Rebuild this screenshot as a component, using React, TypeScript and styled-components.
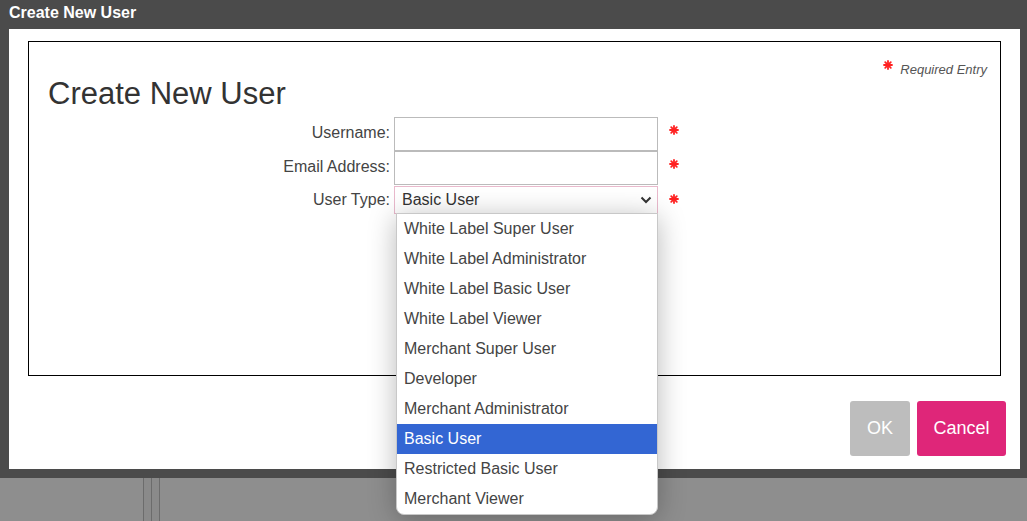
import styled, { createGlobalStyle } from "styled-components";

const GlobalStyle = createGlobalStyle`
  html, body {
    margin: 0;
    padding: 0;
    background: #8e8e8e;
    font-family: "Liberation Sans", Arial, sans-serif;
    overflow: hidden;
  }
`;

const userTypes = [
  "White Label Super User",
  "White Label Administrator",
  "White Label Basic User",
  "White Label Viewer",
  "Merchant Super User",
  "Developer",
  "Merchant Administrator",
  "Basic User",
  "Restricted Basic User",
  "Merchant Viewer",
];

const Page = styled.div`
  width: 1027px;
  height: 521px;
  display: flex;
  flex-direction: column;
`;

const Dialog = styled.div`
  background: #4b4b4b;
  padding: 0 7px 9px 9px;
  display: flex;
  flex-direction: column;
`;

const TitleBar = styled.div`
  height: 29px;
  line-height: 26px;
  color: #fff;
  font-weight: bold;
  font-size: 16px;
`;

const Body = styled.div`
  background: #fff;
  height: 440px;
  box-sizing: border-box;
  padding: 12px 14px 13px 19px;
  display: flex;
  flex-direction: column;
`;

const FormBox = styled.div`
  border: 1px solid #000;
  height: 335px;
  box-sizing: border-box;
  margin-right: 5px;
  padding: 17px 13px 0 19px;
  display: flex;
  flex-direction: column;
`;

const RequiredNote = styled.div`
  display: flex;
  justify-content: flex-end;
  align-items: flex-start;
  gap: 7px;
  height: 20px;
  font-size: 13px;
  font-style: italic;
  color: #555;
  line-height: 21px;
  svg {
    margin-top: 1px;
  }
`;

const Heading = styled.h1`
  margin: -3px 0 0;
  font-size: 31px;
  font-weight: normal;
  line-height: 36px;
  color: #333;
`;

const Fields = styled.div`
  margin-top: 5px;
  display: grid;
  grid-template-columns: 342px 264px auto;
  column-gap: 4px;
  align-items: center;
`;

const Label = styled.label<{ $select?: boolean }>`
  text-align: right;
  font-size: 16px;
  color: #444;
  margin-top: ${(p) => (p.$select ? "1px" : "-3px")};
`;

const TextInput = styled.input`
  box-sizing: border-box;
  width: 264px;
  height: 34px;
  border: 1px solid #bbb;
  margin: 0;
  padding: 0 7px;
  font: 16px "Liberation Sans", Arial, sans-serif;
  outline: none;
`;

const SelectWrap = styled.div`
  position: relative;
  margin-top: 1px;
`;

const SelectBox = styled.div`
  box-sizing: border-box;
  height: 28px;
  border: 1px solid #e9b9cc;
  display: flex;
  align-items: center;
  justify-content: space-between;
  padding: 0 5px 0 7px;
  font-size: 16px;
  color: #333;
`;

const Menu = styled.ul`
  position: absolute;
  top: 27px;
  left: 2px;
  width: 262px;
  margin: 0;
  padding: 0;
  list-style: none;
  background: #fff;
  border: 1px solid #c8c8c8;
  border-radius: 0 0 8px 8px;
  box-shadow: 0 4px 28px rgba(0, 0, 0, 0.28);
  box-sizing: border-box;
  z-index: 5;
  overflow: hidden;
`;

const Option = styled.li<{ $selected?: boolean }>`
  height: 30px;
  line-height: 30px;
  padding-left: 7px;
  font-size: 16px;
  color: ${(p) => (p.$selected ? "#fff" : "#444")};
  background: ${(p) => (p.$selected ? "#3366d3" : "transparent")};
`;

const Star = styled.span<{ $select?: boolean }>`
  display: inline-flex;
  margin-left: 7px;
  margin-top: ${(p) => (p.$select ? "-1px" : "-9px")};
`;

const Buttons = styled.div`
  margin-top: auto;
  display: flex;
  justify-content: flex-end;
  gap: 7px;
`;

const Button = styled.button<{ $kind: "ok" | "cancel" }>`
  height: 55px;
  width: ${(p) => (p.$kind === "ok" ? "60px" : "89px")};
  border: none;
  border-radius: 3px;
  background: ${(p) => (p.$kind === "ok" ? "#bdbdbd" : "#df2679")};
  color: #fff;
  font: 18px "Liberation Sans", Arial, sans-serif;
  cursor: pointer;
`;

const Backdrop = styled.div`
  flex: 1;
  display: flex;
  padding-left: 143px;
`;

const Rail = styled.div`
  width: 7px;
  border-left: 1px solid #6c6c6c;
  background: #8a8a8a;
  &:last-child {
    border-right: 1px solid #6c6c6c;
  }
`;

const Asterisk = () => (
  <svg width="10" height="10" viewBox="0 0 10 10">
    <g stroke="#f22" strokeWidth="1.8" strokeLinecap="round">
      <line x1="5" y1="1" x2="5" y2="9" />
      <line x1="1" y1="5" x2="9" y2="5" />
      <line x1="2.2" y1="2.2" x2="7.8" y2="7.8" />
      <line x1="7.8" y1="2.2" x2="2.2" y2="7.8" />
    </g>
  </svg>
);

const Chevron = () => (
  <svg width="12" height="8" viewBox="0 0 12 8">
    <path d="M1.5 1.5 L6 6 L10.5 1.5" fill="none" stroke="#333" strokeWidth="2" />
  </svg>
);

export default function App() {
  return (
    <Page>
      <GlobalStyle />
      <Dialog>
        <TitleBar>Create New User</TitleBar>
        <Body>
          <FormBox>
            <RequiredNote>
              <Asterisk />
              <span>Required Entry</span>
            </RequiredNote>
            <Heading>Create New User</Heading>
            <Fields>
              <Label>Username:</Label>
              <TextInput />
              <Star>
                <Asterisk />
              </Star>
              <Label>Email Address:</Label>
              <TextInput />
              <Star>
                <Asterisk />
              </Star>
              <Label $select>User Type:</Label>
              <SelectWrap>
                <SelectBox>
                  <span>Basic User</span>
                  <Chevron />
                </SelectBox>
                <Menu>
                  {userTypes.map((t) => (
                    <Option key={t} $selected={t === "Basic User"}>
                      {t}
                    </Option>
                  ))}
                </Menu>
              </SelectWrap>
              <Star $select>
                <Asterisk />
              </Star>
            </Fields>
          </FormBox>
          <Buttons>
            <Button $kind="ok">OK</Button>
            <Button $kind="cancel">Cancel</Button>
          </Buttons>
        </Body>
      </Dialog>
      <Backdrop>
        <Rail />
        <Rail />
      </Backdrop>
    </Page>
  );
}
